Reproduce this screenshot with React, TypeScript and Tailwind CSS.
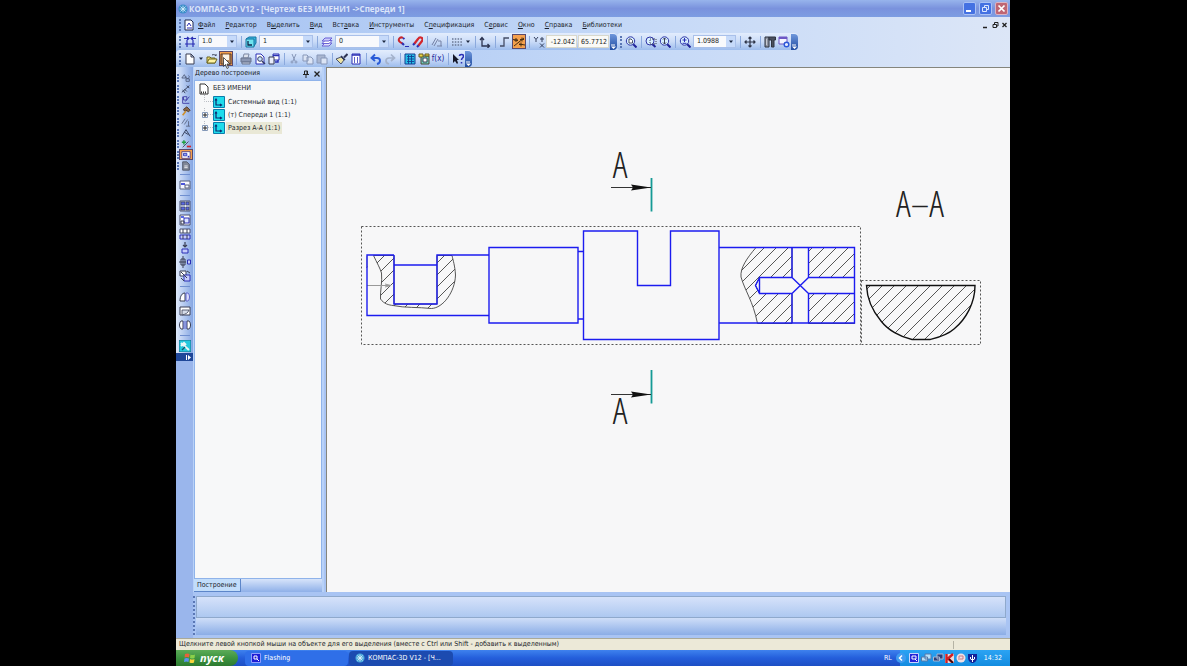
import type { ReactNode } from "react";

const B = "#2a2fb5";
const K = "#3a3f55";

// 12x12 toolbar glyphs
const glyphs: Record<string, ReactNode> = {
  step: <path d="M3 4v7M9 4v7M1 8h10M0 2.500h5M7 2.500h5M3 1l2 1.500L3 4M9 1L7 2.500 9 4" stroke={B} strokeWidth="1.2" />,
  layersView: (
    <>
      <path d="M1 3l3-2h7v6l-2 3" fill="#3bb8e0" stroke="#1573a0" />
      <path d="M1 3h8v8H1z" fill="#6fe3ef" stroke="#1573a0" />
      <path d="M3 5v4h4" stroke="#10254e" strokeWidth="1.3" />
    </>
  ),
  layer: (
    <>
      <path d="M1 10l3-3h7L8 10z" fill="#dfe0fb" stroke="#6a63d6" />
      <path d="M1 7.500l3-3h7l-3 3z" fill="#fff" stroke="#6a63d6" />
      <path d="M1 5l3-3h7L8 5z" fill="#cbc9fa" stroke="#6a63d6" />
    </>
  ),
  magnetOff: (
    <>
      <path d="M6 2C3 0 0 4 3 6l3 2" stroke="#c8252b" strokeWidth="2" />
      <path d="M5 7l2 2M6 2l1.500 1" stroke={B} strokeWidth="2" />
      <path d="M8 10.500h4" stroke={B} />
    </>
  ),
  magnet: (
    <>
      <path d="M2 9l2-2M6 11l2-2" stroke={B} strokeWidth="2.200" />
      <path d="M3.500 7.500L7 3c2-3 6-1 4 2L7.500 9.500" stroke="#d3272d" strokeWidth="2.200" />
    </>
  ),
  parallel: <path d="M1 9l4-7M3 10l4-7M7 5h3v5M6 10h5" stroke="#7481a5" />,
  grid: <path d="M1 3h10M1 6h10M1 9h10" stroke="#6b7894" strokeWidth="1.5" strokeDasharray="1.500 1.300" />,
  axes: <path d="M3 2v8h7M1 4l2-2.500L5 4M8.500 8l2 2-2 2" stroke="#2b3350" strokeWidth="1.300" />,
  ortho: <path d="M1 10h4V2h5" stroke="#454d66" strokeWidth="1.300" />,
  round: (
    <>
      <path d="M1 10L11 2M0 3.500l5 1M6 8l6 1" stroke="#4a2f10" />
      <path d="M1 4h4M3 2v4M7 3.500h4M9 1.500v4M6 8.500h4M8 6.500v4" stroke="#4a2f10" />
    </>
  ),
  coord: <path d="M1 1l2 2.500L5 1M3 3.500V6M9 1v5M7 3h4M7 7.500l4 4M11 7.500l-4 4" stroke="#35405f" />,
  zoomFit: (
    <>
      <path d="M8 8l3.500 3.500" stroke="#22249a" strokeWidth="2" />
      <circle cx="5.500" cy="5" r="4.200" fill="#d8efff" stroke="#2f35a6" />
      <path d="M4 3h2l1.500 1.500V7H4z" fill="#fff" stroke={K} strokeWidth=".9" />
    </>
  ),
  zoomArea: (
    <>
      <path d="M7 8l3.500 3" stroke="#22249a" strokeWidth="2" />
      <circle cx="5" cy="5" r="4" fill="#d8efff" stroke="#2f35a6" />
      <path d="M5 3h6v5H5z" stroke={K} strokeDasharray="1 1" />
    </>
  ),
  zoomDyn: (
    <>
      <path d="M8 8l3.500 3.500" stroke="#22249a" strokeWidth="2" />
      <circle cx="5.500" cy="5" r="4.200" fill="#d8efff" stroke="#2f35a6" />
      <path d="M5.500 2v6M4 3.500 5.500 2 7 3.500M4 6.500 5.500 8 7 6.500" stroke={K} />
    </>
  ),
  zoomIn: (
    <>
      <path d="M8 8l3.500 3.500" stroke="#22249a" strokeWidth="2" />
      <circle cx="5.500" cy="5" r="4.200" fill="#d8efff" stroke="#2f35a6" />
      <path d="M3.500 4h4M5.500 2v4M3.500 7.300h4" stroke={B} />
    </>
  ),
  pan: <path d="M6 1v10M1 6h10M4.500 2.500 6 1l1.500 1.500M4.500 9.500 6 11l1.500-1.500M2.500 4.500 1 6l1.500 1.500M9.500 4.500 11 6 9.500 7.500" stroke="#2d3448" strokeWidth="1.200" />,
  rebuild: (
    <>
      <path d="M1 1h4v10H1z" fill="#8d93a2" stroke="#2f3440" />
      <path d="M5 1h6.500v3H10v7H7.500V4H5z" fill="#4a4f5e" stroke="#2f3440" />
      <path d="M2 4h1M2 6h1M2 8h1" stroke="#fff" />
    </>
  ),
  refresh: (
    <>
      <path d="M1 1h8v7H1z" fill="#f3f5ff" stroke="#6d57c5" />
      <path d="M1 2h8" stroke="#6d57c5" strokeWidth="2" />
      <circle cx="8.500" cy="8.500" r="2.300" stroke="#2b57d8" strokeWidth="1.400" fill="#e6edff" />
    </>
  ),
  page: <path d="M2 1h5l3 3v7H2zM7 1v3h3" fill="#fff" stroke={K} />,
  open: (
    <>
      <path d="M1 4h3l1 1h4v5H1z" fill="#f0dc72" stroke="#6b6420" />
      <path d="M1 10l2-4h8l-2 4z" fill="#fff3a0" stroke="#6b6420" />
      <path d="M6 2c2-1 3 0 4 1V1" stroke={K} />
    </>
  ),
  save: (
    <>
      <path d="M1 1h10v10H1z" fill="#b98a5e" stroke="#5a3c2a" />
      <path d="M3 1.500h6V7H3z" fill="#fbf3e6" />
      <path d="M4 8.500h4V11H4z" fill="#efdfc6" stroke="#5a3c2a" strokeWidth=".6" />
    </>
  ),
  print: (
    <>
      <path d="M3 5l1-4h5L8 5z" fill="#dde2ee" stroke="#7b87a3" />
      <path d="M1 5h10v4H1z" fill="#8b97b3" stroke="#68748f" />
      <path d="M2 9h8v2H2z" fill="#c1c9da" stroke="#68748f" />
    </>
  ),
  preview: (
    <>
      <path d="M2 1h5l3 3v7H2z" fill="#fff" stroke={B} />
      <circle cx="6" cy="6" r="2.300" fill="#cbe7fb" stroke="#333a66" />
      <path d="M8 8l3 3" stroke="#333a66" strokeWidth="1.500" />
    </>
  ),
  pages: (
    <>
      <path d="M5 1h6v6H5z" fill="#fff" stroke={B} />
      <path d="M1 4h5v7H1z" fill="#e9edfb" stroke={K} />
      <path d="M5 2.500h6M7 9h3V7" stroke={B} strokeWidth="1.400" />
    </>
  ),
  cut: <path d="M4 1l3 7M8 1L5 8M3 9a1 1 0 1 0 2 0 1 1 0 1 0-2 0M7 9a1 1 0 1 0 2 0 1 1 0 1 0-2 0" stroke="#8797b8" />,
  copy: <path d="M1 2h4l1 1v5H1zM5 4h4l2 2v5H5z" fill="#dbe4f5" stroke="#8797b8" />,
  paste: (
    <>
      <path d="M1 2h8v8H1z" fill="#a9b6d0" stroke="#8797b8" />
      <path d="M5 5h6v6H5z" fill="#dbe4f5" stroke="#8797b8" />
    </>
  ),
  brush: (
    <>
      <path d="M11.500 1L8 4.500" stroke="#2c3352" strokeWidth="2" />
      <path d="M5 4l3 3-3 4-5-5z" fill="#ece3a4" stroke="#47506c" />
      <path d="M5 3l4 4" stroke="#2c3352" strokeWidth="1.500" />
    </>
  ),
  table: (
    <>
      <path d="M2 1h8v10H2z" fill="#fff" stroke={B} />
      <path d="M2 2h8M4 5h1M7 5h1M4 7h1M7 7h1M4 9h1M7 9h1" stroke={B} strokeWidth="1.400" />
    </>
  ),
  undo: <path d="M2 5h5c4 0 4 5 0 6M5 1.500L1.500 5 5 8" stroke="#2a5bd7" strokeWidth="1.900" />,
  redo: <path d="M10 5H5C1 5 1 10 5 11M7 1.500 10.500 5 7 8" stroke="#a4b2cc" strokeWidth="1.700" />,
  calc: (
    <>
      <path d="M1 1h10v10H1z" fill="#26c0e6" stroke="#123f94" />
      <path d="M3 3.500h7M3 6h7M3 8.500h7M4.500 2v9M7.500 2v9" stroke="#123f94" strokeWidth=".9" />
    </>
  ),
  manager: (
    <>
      <path d="M3 3h8v8H3z" fill="#6ecfbd" stroke="#4b4434" />
      <path d="M5 5h4v4H5z" fill="#fff" stroke={K} />
      <path d="M1 1h4v3H1zM7 1h4v2H7z" fill="#e8d946" stroke="#6b5a1c" />
    </>
  ),
  help: (
    <>
      <path d="M1 1v9l2-2 2 3 1-1-1-3h2z" fill="#15182a" />
      <path d="M7.500 3c0-2 4-2 4 0S9.500 5 9.500 7M9.500 9v1.500" stroke={B} strokeWidth="1.500" />
    </>
  ),
  sheet: (
    <>
      <path d="M2 1h6l2 2v8H2z" fill="#fff" stroke="#20284f" />
      <path d="M4 7l2-3 2 3M4 9h5" stroke={B} />
    </>
  ),
  geometry: <path d="M1 6l3-4 2 4zM6 7h4v3H6zM6 4a2 2 0 1 0 3-1" stroke="#4c5876" />,
  dims: <path d="M1 10l9-8M2 7l3 4M7 2l3 3M4 6l3 3" stroke="#3d4763" strokeWidth="1.200" />,
  notes: <path d="M2 2v8h8M3 2h4v4H3zM5 8l5-6" stroke="#413ea6" strokeWidth="1.100" />,
  edit: (
    <>
      <path d="M3 4l4-3 4 4-2 2-3-2-2 1z" fill="#8a6a4c" stroke="#4a3322" />
      <path d="M6 6l-4 5" stroke="#d0902c" strokeWidth="2" />
    </>
  ),
  param: <path d="M1 8l4-6M4 9l4-6M9 5v6M6 11h5" stroke="#59647f" />,
  measure: <path d="M1 10L6 2l5 8M4 5l5 3" stroke="#3d4763" strokeWidth="1.200" />,
  select: (
    <>
      <path d="M2 10l7-7" stroke={K} />
      <path d="M1 4h5M3.500 1.500v5" stroke="#23a046" strokeWidth="1.800" />
      <path d="M7 9h5" stroke="#d5242c" strokeWidth="2" />
    </>
  ),
  views: (
    <>
      <path d="M1 2h10v8H1z" fill="#fff" stroke="#4d3b79" />
      <path d="M3 4h4v3H3z" fill="#8ea4f4" stroke={B} />
      <path d="M8 8h2" stroke={B} strokeWidth="2" />
    </>
  ),
  spec: (
    <>
      <path d="M2 1h5l3 3v7H2z" fill="#818898" stroke="#4a5162" />
      <path d="M4 6h4M4 8h4" stroke="#fff" />
    </>
  ),
  viewNew: (
    <>
      <path d="M1 2h10v8H1z" fill="#f5f7ff" stroke="#58617c" />
      <path d="M2 4h4v2H2z" fill="#4b55da" />
      <path d="M6 6h4v3H6z" stroke="#58617c" />
    </>
  ),
  viewStd: (
    <>
      <path d="M1 1h10v10H1z" fill="#dfe6fb" stroke="#4a5170" />
      <path d="M2 2h4v3H2zM7 2h3v3H7zM2 7h4v3H2zM7 7h3v3H7z" fill="#5a68e6" stroke={K} strokeWidth=".7" />
    </>
  ),
  viewProj: (
    <>
      <path d="M1 1h10v10H1z" fill="#fff" stroke="#4a5170" />
      <path d="M2 2h3v2H2z" fill="#5a68e6" />
      <path d="M5 4h5v5H5z" fill="#dce4ff" stroke={B} />
      <path d="M2 7h3v3H2z" stroke={K} />
    </>
  ),
  viewBreak: (
    <>
      <path d="M1 1h10v4H1z" fill="#fff" stroke="#4a5170" />
      <path d="M1 7h10v4H1z" fill="#c6ccfb" stroke={B} />
      <path d="M4 1v4M8 1v4M4 7v4M8 7v4" stroke={K} />
    </>
  ),
  arrowView: (
    <>
      <path d="M6 0v5M4 3l2 2 2-2" stroke={K} strokeWidth="1.200" />
      <path d="M3 7h6v4H3z" fill="#c6ccfb" stroke={B} />
    </>
  ),
  cutView: (
    <>
      <path d="M0 6h7M4 0v12M2 3h4v6H2z" stroke={K} />
      <path d="M8.500 4h3v4h-3z" fill="#c6ccfb" stroke={B} />
    </>
  ),
  detail: (
    <>
      <path d="M1 1h6v5H1z" fill="#fff" stroke={K} />
      <path d="M5 5h6v6H5z" fill="#c6ccfb" stroke={B} />
      <path d="M2 8l3 3M8 1l3 2M2 2l6 6" stroke={K} />
    </>
  ),
  local: (
    <>
      <path d="M1 10c0-5 2-8 5-8v8z" fill="#fff" stroke={K} />
      <path d="M7 2h2c2 2 2 6 0 8H7z" fill="#d9dcfb" stroke="#6067cd" />
    </>
  ),
  breakOut: (
    <>
      <path d="M1 2h10v8H1z" fill="#fff" stroke={K} />
      <path d="M3 10V5h7c-1 3-3 4-7 5" fill="#d6dce8" stroke={K} strokeWidth=".8" />
    </>
  ),
  gap: (
    <>
      <path d="M4 2H2C0 4 0 8 2 10h2zM8 2h2c2 2 2 6 0 8H8z" fill="#fff" stroke={K} />
      <path d="M5 2v8M7 2v8" stroke="#6067cd" />
    </>
  ),
  tools: (
    <>
      <path d="M0 0h12v12H0z" fill="#26c8dd" stroke="#1a6c8e" />
      <path d="M2 3l8 7M2 6l3-3 2 2" stroke="#e9f6f8" strokeWidth="2" />
      <path d="M3 10l3-3" stroke="#14566e" strokeWidth="1.200" />
    </>
  ),
  axesView: (
    <>
      <path d="M.5.5h11v11H.5z" fill="#1fdcec" stroke="#0b7cab" />
      <path d="M3 3v6h5M2 4.500 3 3l1 1.500M7 8l1.500 1L7 10" stroke="#0b2a6e" strokeWidth="1.200" />
    </>
  ),
};

const Glyph = ({ name }: { name: string }) => (
  <svg viewBox="0 0 12 12" fill="none" className="h-3 w-3 shrink-0" aria-hidden="true">
    {glyphs[name]}
  </svg>
);

const Tool = ({ name, active }: { name: string; active?: boolean }) => (
  <button
    aria-label={name}
    className={
      active
        ? "flex h-[15px] w-[14px] shrink-0 items-center justify-center border border-[#5b4a6b] bg-[#f5a04c]"
        : "flex h-[15px] w-[14px] shrink-0 items-center justify-center"
    }
  >
    <Glyph name={name} />
  </button>
);

const Sep = () => (
  <span className="flex w-[6px] shrink-0 justify-center">
    <span className="h-3 w-px bg-[#8ba9dd]" />
  </span>
);

const Grip = () => <span className="mr-[2px] ml-[3px] h-3 w-[2px] shrink-0 border-l-2 border-dotted border-[#5a77b5]" />;

const Caret = () => (
  <svg viewBox="0 0 6 4" className="mx-px h-1 w-1.5 shrink-0" aria-hidden="true">
    <path d="M1 .5h4L3 3z" fill="#1c2740" />
  </svg>
);

const Cap = () => (
  <span className="flex h-[16px] w-[7px] shrink-0 items-end justify-center rounded-r bg-gradient-to-b from-[#6f97dc] to-[#1f4ba0] pb-px">
    <svg viewBox="0 0 5 5" className="h-[5px] w-[5px]" aria-hidden="true">
      <path d="M0 .5h4v1H0zM0 2.500h5L2.500 5z" fill="#fff" />
    </svg>
  </span>
);

const Combo = ({ label, value, width }: { label: string; value: string; width: string }) => (
  <label className={`relative mx-px flex h-[13px] shrink-0 items-center border border-[#a9c0ea] bg-[#f8f9fc] ${width}`}>
    <select aria-label={label} className="h-full w-full appearance-none pl-[3px] text-[7px] leading-[11px] text-[#222]">
      <option>{value}</option>
    </select>
    <span className="pointer-events-none absolute inset-y-0 right-0 flex w-[9px] items-center justify-center bg-[#c6dafa]">
      <Caret />
    </span>
  </label>
);

const Coord = ({ label, value }: { label: string; value: string }) => (
  <input
    aria-label={label}
    defaultValue={value}
    className="mr-px h-[13px] w-[31px] shrink-0 border border-[#d8d8cc] bg-[#fafaf7] pr-px text-right text-[7px] text-[#222]"
  />
);

const bar = "flex h-[17px] items-center rounded bg-gradient-to-b from-[#e3edfd] via-[#cbdcf8] to-[#9dbcec]";

const menu = [
  ["", "Ф", "айл"],
  ["", "Р", "едактор"],
  ["В", "ы", "делить"],
  ["", "В", "ид"],
  ["Вст", "а", "вка"],
  ["", "И", "нструменты"],
  ["С", "п", "ецификация"],
  ["С", "е", "рвис"],
  ["", "О", "кно"],
  ["", "С", "правка"],
  ["", "Б", "иблиотеки"],
];

const TitleBar = () => (
  <header className="flex h-[17px] items-center bg-gradient-to-b from-[#97b4ec] via-[#7a92dd] to-[#7d9de2] pr-[2px] pl-[2px]">
    <svg viewBox="0 0 12 12" className="h-[10px] w-[10px]" fill="none" aria-hidden="true">
      <circle cx="6" cy="6" r="5.500" fill="#3b8ec9" />
      <path d="M3 3l6 6M9 3L3 9M6 2v8M2 6h8" stroke="#d5effb" />
    </svg>
    <h1 className="ml-px flex-1 font-[Open_Sans,sans-serif] text-[8px] leading-[17px] font-bold whitespace-nowrap text-[#dce6fa]">
      КОМПАС-3D V12 - [Чертеж БЕЗ ИМЕНИ1 -&gt;Спереди 1]
    </h1>
    <div className="flex gap-[3px]">
      <button aria-label="Свернуть" className="h-[13px] w-[13px] rounded-[2px] border border-[#a9c1f5] bg-[#4471e2]">
        <svg viewBox="0 0 11 11" aria-hidden="true"><path d="M2 8h5" stroke="#fff" strokeWidth="2" /></svg>
      </button>
      <button aria-label="Восстановить" className="h-[13px] w-[13px] rounded-[2px] border border-[#a9c1f5] bg-[#4471e2]">
        <svg viewBox="0 0 11 11" fill="none" aria-hidden="true"><path d="M4.500 4V2.500h4v4H7M2.500 4.500h4v4h-4z" stroke="#dbe6ff" /></svg>
      </button>
      <button aria-label="Закрыть" className="h-[13px] w-[13px] rounded-[2px] border border-[#d9b4c4] bg-[#bf6674]">
        <svg viewBox="0 0 11 11" aria-hidden="true"><path d="M2.500 2.500l6 6M8.500 2.500l-6 6" stroke="#fff" strokeWidth="1.700" /></svg>
      </button>
    </div>
  </header>
);

const MenuBar = () => (
  <nav className="flex h-4 items-center">
    <Grip />
    <Glyph name="sheet" />
    <ul className="ml-[3px] flex flex-1 gap-[10px]">
      {menu.map(([a, b, c]) => (
        <li key={a + b + c}>
          <a href="#" className="block leading-4 whitespace-nowrap">
            {a}
            <span className="underline">{b}</span>
            {c}
          </a>
        </li>
      ))}
    </ul>
    <svg viewBox="0 0 26 8" fill="none" stroke="#222" className="mr-[2px] h-2 w-[26px]" aria-hidden="true">
      <path d="M1 6.500h4" strokeWidth="1.500" />
      <path d="M12.500 3V1.500h3.500V5h-1.500M11 3.500h3.500v3H11z" />
      <path d="M20.500 2l4 4M24.500 2l-4 4" strokeWidth="1.300" />
    </svg>
  </nav>
);

const Toolbars = () => (
  <>
    <div className="flex">
      <div className={bar}>
        <Grip />
        <Tool name="step" />
        <Combo label="Шаг курсора" value="1.0" width="w-[39px]" />
        <Sep />
        <Tool name="layersView" />
        <Combo label="Вид" value="1" width="w-[54px]" />
        <Sep />
        <Tool name="layer" />
        <Combo label="Слой" value="0" width="w-[54px]" />
        <Sep />
        <Tool name="magnetOff" />
        <Tool name="magnet" />
        <Sep />
        <Tool name="parallel" />
        <Sep />
        <Tool name="grid" />
        <Caret />
        <Sep />
        <Tool name="axes" />
        <Sep />
        <Tool name="ortho" />
        <Tool name="round" active />
        <Sep />
        <Tool name="coord" />
        <Coord label="X" value="-12.042" />
        <Coord label="Y" value="65.7712" />
        <Cap />
      </div>
      <div className={bar}>
        <Grip />
        <Tool name="zoomFit" />
        <Sep />
        <Tool name="zoomArea" />
        <Tool name="zoomDyn" />
        <Sep />
        <Tool name="zoomIn" />
        <Combo label="Масштаб" value="1.0988" width="w-[43px]" />
        <Sep />
        <Tool name="pan" />
        <Sep />
        <Tool name="rebuild" />
        <Tool name="refresh" />
        <Cap />
      </div>
    </div>
    <div className="flex">
      <div className={bar}>
        <Grip />
        <Tool name="page" />
        <Caret />
        <Tool name="open" />
        <span className="relative">
          <Tool name="save" active />
          <svg viewBox="0 0 8 12" className="absolute top-1.5 left-1 z-10 h-3 w-2" aria-hidden="true">
            <path d="M.5.5v9l2-2 1.500 4 1.500-.8L4 7h3z" fill="#fff" stroke="#333" strokeWidth=".8" />
          </svg>
        </span>
        <Sep />
        <Tool name="print" />
        <Tool name="preview" />
        <Tool name="pages" />
        <Sep />
        <Tool name="cut" />
        <Tool name="copy" />
        <Tool name="paste" />
        <Sep />
        <Tool name="brush" />
        <Tool name="table" />
        <Sep />
        <Tool name="undo" />
        <Tool name="redo" />
        <Sep />
        <Tool name="calc" />
        <Tool name="manager" />
        <button className="w-[14px] shrink-0 text-[8px] leading-[15px] text-[#23279b]">f(x)</button>
        <Sep />
        <Tool name="help" />
        <Cap />
      </div>
    </div>
  </>
);

const panels = ["geometry", "dims", "notes", "edit", "param", "measure", "select", "views", "spec"];
const viewTools = [
  ["viewNew"],
  ["viewStd", "viewProj", "viewBreak", "arrowView", "cutView", "detail"],
  ["local", "breakOut", "gap"],
  ["tools"],
];

const SideBar = () => (
  <aside className="flex w-[17px] shrink-0 flex-col bg-[#9ab6ec]">
    <div className="flex flex-col items-end bg-gradient-to-r from-[#e0eafb] to-[#86a6e2] pt-[5px]">
      {panels.map((p) => (
        <div key={p} className="flex h-[11px] items-center">
          <span className="h-2 border-l-2 border-dotted border-[#5a77b5]" />
          <button
            aria-label={p}
            className={
              p === "views"
                ? "flex h-[11px] w-[14px] items-center justify-center border border-[#5b4a6b] bg-[#f5a04c]"
                : "flex h-[11px] w-[14px] items-center justify-center"
            }
          >
            <svg viewBox="0 0 12 12" fill="none" className="h-[10px] w-[10px]" aria-hidden="true">{glyphs[p]}</svg>
          </button>
        </div>
      ))}
      {viewTools.map((group) => (
        <div key={group[0]} className="flex flex-col items-center">
          <span className="my-[3px] h-px w-[10px] bg-[#6f8fd0]" />
          {group.map((g) => (
            <button key={g} aria-label={g} className="flex h-[14px] w-4 items-center justify-center">
              <Glyph name={g} />
            </button>
          ))}
        </div>
      ))}
      <span className="flex h-2 w-full items-center justify-end bg-[#1f4799] pr-[2px]">
        <svg viewBox="0 0 5 5" className="h-[5px] w-[5px]" aria-hidden="true"><path d="M0 0h1v5H0zM2 0v5l3-2.500z" fill="#fff" /></svg>
      </span>
    </div>
  </aside>
);

const Tree = () => (
  <section className="flex w-[131px] shrink-0 flex-col bg-[#b9d2f8] pr-[2px] pl-px">
    <div className="flex h-[13px] shrink-0 items-center gap-1 bg-gradient-to-b from-[#d3e3fb] to-[#a4c1f0] px-px">
      <h2 className="flex-1 whitespace-nowrap">Дерево построения</h2>
      <button aria-label="Закрепить" className="mr-px">
        <svg viewBox="0 0 6 8" className="h-2 w-1.5" fill="none" stroke="#222" aria-hidden="true"><path d="M1.500 1h3v3.500h-3zM0 4.500h6M3 4.500V8M4 1v3" /></svg>
      </button>
      <button aria-label="Закрыть" className="mr-px">
        <svg viewBox="0 0 6 6" className="h-1.5 w-1.5" stroke="#222" strokeWidth="1.300" aria-hidden="true"><path d="M.5.5l5 5M5.500.5l-5 5" /></svg>
      </button>
    </div>
    <ul className="flex-1 border border-[#8fb3ea] bg-[#f7f8f9] pt-px pl-[3px]">
      <li className="flex h-[13px] items-center gap-[3px]">
        <svg viewBox="0 0 12 12" fill="none" className="h-3 w-3 shrink-0" aria-hidden="true">
          <path d="M2 1h5l3 3v7H2z" fill="#fff" stroke="#333" />
          <path d="M3 9.500h6" stroke="#333" strokeDasharray="1 1" strokeWidth="2" />
        </svg>
        БЕЗ ИМЕНИ
      </li>
      {["Системный вид (1:1)", "(т) Спереди 1 (1:1)", "Разрез А-А (1:1)"].map((t, i) => (
        <li key={t} className="flex h-[13px] items-center pl-[2px]">
          <svg viewBox="0 0 13 13" fill="none" className="h-[13px] w-[13px] shrink-0" aria-hidden="true">
            <path d="M4.500 0v6.500H13" stroke="#b9bcc2" strokeDasharray="1 1" />
            {i > 0 && <path d="M2.500 4.500h5v5h-5z" fill="#fff" stroke="#8499b8" />}
            {i > 0 && <path d="M3 7h4M5 5v4" stroke="#222" />}
          </svg>
          <Glyph name="axesView" />
          <span className={i === 2 ? "ml-px bg-[#e9e8d6] px-[2px] leading-3 whitespace-nowrap" : "ml-px px-[2px] leading-3 whitespace-nowrap"}>{t}</span>
        </li>
      ))}
    </ul>
    <div className="flex h-[13px] shrink-0 bg-gradient-to-b from-[#d7e4fa] to-[#8fb0e8]">
      <button className="border-r border-b border-[#5d86c9] bg-[#c2ddfa] px-[3px] leading-3">Построение</button>
    </div>
  </section>
);

const Drawing = () => (
  <main className="min-w-0 flex-1 border-t border-l border-[#85857c] bg-[#f7f7f8]">
    <svg viewBox="327 68 683 524" preserveAspectRatio="xMinYMin meet" className="h-full w-full" fill="none" role="img" aria-label="Чертеж вала">
      <defs>
        <pattern id="hatch" x="4" width="12" height="12" patternUnits="userSpaceOnUse">
          <path d="M-1 13L13-1M-1 1L1-1M11 13l2-2" stroke="#444" strokeWidth=".9" />
        </pattern>
      </defs>
      <g stroke="#555" strokeWidth="1" strokeDasharray="2 2">
        <path d="M361.500 226.500H860.500V344.500H361.500z" />
        <path d="M861.500 280.500H980.500V344.500H861.500z" />
      </g>
      {/* local sections */}
      <g fill="url(#hatch)" stroke="#444" strokeWidth=".9">
        <path d="M373.500 255.500C377 263 380 268 381.500 273C382.500 282 380 291 380.500 299C384 304 389 305 393 305.500C405 308 418 307 431.500 308.500C443 308 455 292 455.500 275C455 266 453 260 452 255.500H437V304H394V255.500z" />
        <path d="M756 247.500C747 258 740 268 741 277C745 291 753 301 757.500 323.500H792V293.500H759.500L755.500 285.500L759.500 277.500H792V247.500z" />
        <path d="M808.500 247.500H854.500V277.500H808.500zM808.500 293.500H854.500V323.500H808.500z" />
      </g>
      <path d="M367 285.500H391M385 284l6 1.500-6 1.500M367 256v12M366 268l2-2" stroke="#999" />
      <g stroke="#1c1cf0" strokeWidth="1.400">
        <path d="M394 255H367V315.500H489M394 255V304H437V255H489M394 265H437" />
        <path d="M489 247.500H578V323H489z" />
        <path d="M578 251.500h5.500M578 319h5.500" />
        <path d="M583.500 231H637.500V285.500H670.500V231H719V339.500H583.500z" />
        <path d="M719 247.500H854.500V323H719" />
        <path d="M792 247.500V277.500H759.500V293.500H792V323M808.500 247.500V277.500H854.500M808.500 323V293.500H854.500M759.500 277.500L755.500 285.500L759.500 293.500M792 277.500L808.500 293.500M808.500 277.500L792 293.500" />
      </g>
      <path d="M866.500 285.500H975C975 303 966 319 954 329C946 336 936 338 930 339.500H912C900 337 888 330 881 321C870 308 867 297 866.500 285.500z" fill="url(#hatch)" stroke="#111" strokeWidth="1.400" />
      {/* section marks */}
      <path d="M651.500 178V211.500M651.500 370V403.500" stroke="#159a95" strokeWidth="1.800" />
      <path d="M611 187.500H651M611 394.500H651" stroke="#333" />
      <path d="M631 184.500L651 187.500L631 190.500L633 187.500zM631 391.500L651 394.500L631 397.500L633 394.500z" fill="#111" />
      <g fill="#222" className="font-[Open_Sans_Condensed_Light,Roboto_Condensed,Open_Sans,sans-serif] text-[37px] font-light">
        <text x="620" y="178" textAnchor="middle">А</text>
        <text x="620" y="424" textAnchor="middle">А</text>
        <text x="920" y="217" textAnchor="middle">А–А</text>
      </g>
    </svg>
  </main>
);

const TaskBar = () => (
  <footer className="flex h-4 shrink-0 items-center bg-gradient-to-b from-[#3f82ee] via-[#245edb] to-[#1d4fc4] text-white">
    <button className="flex h-full w-[62px] items-center gap-1 rounded-r-lg bg-gradient-to-b from-[#5cab58] via-[#3c9440] to-[#2d7a30] pl-2">
      <svg viewBox="0 0 12 12" className="h-3 w-3" aria-hidden="true">
        <path d="M1 2q2.500-1 4.500 0L5 5.500q-2-1-4.500 0z" fill="#e8623a" />
        <path d="M6.500 2.500q2 1 4.500 0L10.500 6q-2 1-4.500 0z" fill="#8bd04a" />
        <path d="M.5 6.500q2-1 4.500 0L4.500 10q-2-1-4.500 0z" fill="#5a93f0" />
        <path d="M6 7q2 1 4.500 0L10 10.500q-2 1-4.500 0z" fill="#f6d43c" />
      </svg>
      <span className="font-[Open_Sans,sans-serif] text-[11px] leading-4 font-bold italic">пуск</span>
    </button>
    <button className="ml-[7px] flex h-[15px] w-[103px] items-center gap-[3px] rounded-sm bg-[#2f6fe8] pl-1.5 whitespace-nowrap">
      <svg viewBox="0 0 10 10" fill="none" className="h-[10px] w-[10px]" aria-hidden="true"><path d="M.5.5h9v9h-9z" fill="#1c1cd6" stroke="#8f9cff" /><path d="M3 3h3v3H3zM6 6l2 2" stroke="#fff" /></svg>
      Flashing
    </button>
    <button className="ml-px flex h-[15px] w-[104px] items-center gap-[3px] rounded-sm bg-[#1c4bb0] pl-1.5 whitespace-nowrap">
      <svg viewBox="0 0 12 12" fill="none" className="h-[10px] w-[10px]" aria-hidden="true"><circle cx="6" cy="6" r="5.500" fill="#4aa6da" /><path d="M3 3l6 6M9 3L3 9M6 2v8M2 6h8" stroke="#e3f5fc" /></svg>
      КОМПАС-3D V12 - [Ч...
    </button>
    <span className="mr-2 ml-auto">RL</span>
    <div className="flex h-full items-center gap-[2px] bg-gradient-to-b from-[#2ba3f3] to-[#128ce0] pr-2">
      <svg viewBox="0 0 10 10" fill="none" className="-ml-1 h-[10px] w-[10px]" aria-hidden="true"><circle cx="5" cy="5" r="5" fill="#3f9bf0" /><path d="M6 2.500L3.500 5 6 7.500" stroke="#fff" strokeWidth="1.500" /></svg>
      <svg viewBox="0 0 70 10" fill="none" className="h-[10px] w-[70px]" aria-hidden="true">
        <path d="M1.500.5h9v9h-9z" fill="#2424d8" stroke="#c8d4ff" />
        <path d="M4 3h4v3H4zM7 6l2 2" stroke="#fff" />
        <path d="M17 1h6v5h-6zM13.500 4h6v4h-6z" fill="#b7e1fa" stroke="#5879a8" />
        <path d="M29 1h6v5h-6zM25.500 4h6v4h-6z" fill="#2b3e78" stroke="#a7b5d0" />
        <path d="M37 1h9v9h-9z" fill="#e9dcdc" />
        <path d="M38.500 1v9M45 1l-5 4.500 5 4.500" stroke="#d21f22" strokeWidth="2.400" />
        <path d="M41 6l4 4" stroke="#2a0b0b" strokeWidth="1.500" />
        <circle cx="53" cy="5" r="4.500" fill="#f2dfe3" />
        <path d="M51 7V3h4v3h-3" stroke="#c77a86" />
        <path d="M60 1h9v4c0 3-3 5-4.500 5S60 8 60 5z" fill="#13239a" />
        <path d="M64.500 2v7M62.500 4v2l2 1 2-1V4" stroke="#fff" />
      </svg>
      <time className="ml-1">14:32</time>
    </div>
  </footer>
);

const App = () => (
  <div className="flex h-screen min-h-[480px] bg-black pr-[177px] pl-44 font-['DejaVu_Sans_Condensed','DejaVu_Sans',sans-serif] text-[7px] text-[#1b1f2b]">
    <div className="flex min-w-0 flex-1 flex-col overflow-hidden">
      <TitleBar />
      <div className="bg-gradient-to-r from-[#a5c2f2] via-[#c2d7f7] to-[#dce6f7]">
        <MenuBar />
        <Toolbars />
      </div>
      <div className="flex min-h-0 flex-1">
        <SideBar />
        <div className="flex min-w-0 flex-1 flex-col bg-[#a9c4f3]">
          <div className="flex min-h-0 flex-1 gap-[2px]">
            <Tree />
            <Drawing />
          </div>
          <div className="flex h-[46px] shrink-0 pt-1 pr-1 pb-[3px]">
            <span className="mr-px w-[2px] border-l-2 border-dotted border-[#5a77b5]" />
            <div className="flex flex-1 flex-col">
              <div className="h-[22px] border border-[#8fa9cc] bg-gradient-to-b from-[#d6e2fa] to-[#adc8f0]" />
              <div className="flex-1 bg-gradient-to-b from-[#cfdef8] to-[#8badE6]" />
            </div>
          </div>
        </div>
      </div>
      <div className="flex h-3 shrink-0 items-center border-t border-[#a9a99a] bg-[#ece9d8] pl-[3px] whitespace-nowrap">
        <p className="flex-1">Щелкните левой кнопкой мыши на объекте для его выделения (вместе с Ctrl или Shift - добавить к выделенным)</p>
        <span className="mr-14 h-2 w-px bg-[#b5b3a4]" />
      </div>
      <TaskBar />
    </div>
  </div>
);

export default App;
